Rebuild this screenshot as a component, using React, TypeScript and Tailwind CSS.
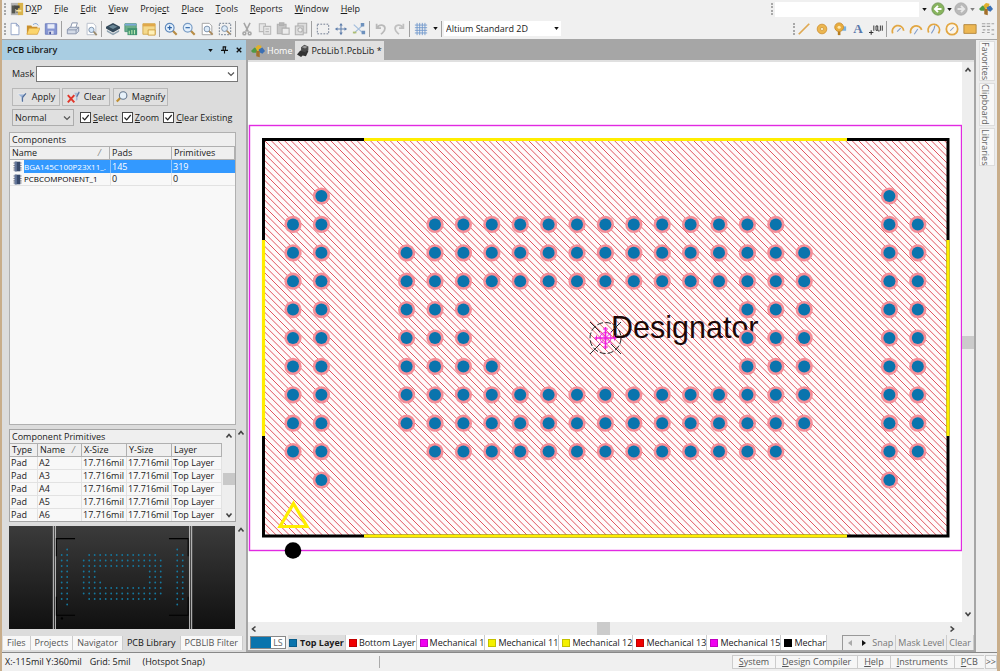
import type { ReactNode } from "react";

function Svg({ children, size = 14 }: { children: ReactNode; size?: number }) {
  return (
    <svg viewBox="0 0 16 16" width={size} height={size} aria-hidden="true" className="shrink-0">
      {children}
    </svg>
  );
}

const icons: Record<string, ReactNode> = {
  "New": <path d="M3.500 1.500h6l3 3v10h-9zM9.500 1.500v3h3" fill="#fff" stroke="#8c9ec4" />,
  "Open": (
    <>
      <path d="M1 4h5l1 1.500h6V14H1z" fill="#c98f2c" />
      <path d="M3.500 7H16l-3 7H1z" fill="#fbd56d" stroke="#d29b35" strokeWidth=".7" />
      <path d="M8 3q4-3 6 1" fill="none" stroke="#7d9fce" />
    </>
  ),
  "Save": (
    <>
      <path d="M1.500 2h13v12h-13z" fill="#8595d2" stroke="#6c7bbb" />
      <path d="M4 2.500h8v5H4z" fill="#e8ecf8" />
      <path d="M5 10h6v4H5z" fill="#d4d8ec" />
      <path d="M6 11h2v3H6z" fill="#47549a" />
    </>
  ),
  "Print": (
    <>
      <path d="M5 7l2-6h6l-2 6" fill="#fff" stroke="#7f8ca6" />
      <path d="M1.500 8.500l3-2.500h10v4.500l-3 3h-10z" fill="#d3dae6" stroke="#8490a8" />
      <path d="M1.500 9h10v4M11.500 9l3-3" fill="none" stroke="#8490a8" />
    </>
  ),
  "Preview": (
    <>
      <path d="M3.500 1.500h7l3 3v10h-10z" fill="#fff" stroke="#b4bcc8" />
      <circle cx="8.500" cy="9" r="3" fill="#d4e6f7" stroke="#7389a4" />
      <path d="M11 11l3.500 4" stroke="#9a8a6c" strokeWidth="2" />
    </>
  ),
  "Layers": (
    <>
      <path d="M1 9l7 4 7-4v2l-7 4-7-4z" fill="#8ea2b0" />
      <path d="M0 5.500L8 1l8 4.500v2L8 12 0 7.500z" fill="#33495a" />
      <path d="M3 5.500L8 3l5 2.500L8 8z" fill="#6a8797" />
    </>
  ),
  "Board": (
    <>
      <path d="M1 2h13v9H1z" fill="#6dae8a" stroke="#4a9478" />
      <path d="M1 2h13v2H1z" fill="#7aa8d8" />
      <path d="M4 7h11v8H4z" fill="#3f9370" />
      <path d="M6 14v-4M9 14V9M12 14v-5" stroke="#b8e8ae" strokeWidth="1.300" />
    </>
  ),
  "Document": (
    <>
      <path d="M1 2h14v12H1z" fill="#f4d98c" stroke="#cfa54c" />
      <path d="M1 2h14v3H1z" fill="#e0a84a" />
      <path d="M7 9h8v6H7z" fill="#fff0b8" stroke="#cf9b3a" />
    </>
  ),
  "Zoom in": (
    <>
      <path d="M9.500 9.500l5 5" stroke="#b98d45" strokeWidth="2.500" />
      <circle cx="6.500" cy="6.500" r="5" fill="#e3f0fc" stroke="#5e88bb" strokeWidth="1.300" />
      <path d="M4 6.500h5M6.500 4v5" stroke="#2b61a5" strokeWidth="1.300" />
    </>
  ),
  "Zoom out": (
    <>
      <path d="M9.500 9.500l5 5" stroke="#b98d45" strokeWidth="2.500" />
      <circle cx="6.500" cy="6.500" r="5" fill="#e3f0fc" stroke="#7a9cc4" strokeWidth="1.300" />
      <path d="M4 6.500h5" stroke="#2b61a5" strokeWidth="1.300" />
    </>
  ),
  "Fit document": (
    <>
      <path d="M2.500 1.500h8l3 3v10h-11z" fill="#fff" stroke="#9a9a9a" />
      <circle cx="8" cy="8" r="3.300" fill="#dcebf9" stroke="#7389a4" />
      <path d="M10.500 10.500l4 4" stroke="#a8875a" strokeWidth="2" />
    </>
  ),
  "Zoom area": (
    <>
      <path d="M1.500 1.500h13v13h-13z" fill="none" stroke="#5e6d80" strokeDasharray="2 1.500" />
      <circle cx="7.500" cy="7.500" r="3.300" fill="#dcebf9" stroke="#7389a4" />
      <path d="M10 10l4 4" stroke="#a8875a" strokeWidth="2" />
    </>
  ),
  "Cut": (
    <g stroke="#a6a6a6" strokeWidth="1.800" fill="none">
      <path d="M4.500 1l5 10M11.500 1l-5 10" />
      <circle cx="5" cy="13" r="1.600" />
      <circle cx="11" cy="13" r="1.600" />
    </g>
  ),
  "Copy": (
    <g fill="#e6e6e6" stroke="#b8b8b8" strokeWidth="1.200">
      <path d="M1.500 2h7v9h-7z" />
      <path d="M6.500 5h8v9h-8zM8.500 8h4M8.500 11h4" />
    </g>
  ),
  "Paste": (
    <g fill="#c6c6c6" stroke="#b0b0b0" strokeWidth="1.200">
      <path d="M1.500 2.500h10v11h-10zM4 1h5v3H4z" />
      <path d="M7 7h8v7H7z" fill="#ececec" />
    </g>
  ),
  "Paste array": (
    <g fill="#dcdcdc" stroke="#b0b0b0" strokeWidth="1.200">
      <path d="M4.500 1.500h10v11h-10z" />
      <path d="M1.500 4.500h9v10h-9z" />
      <circle cx="7" cy="9" r="2.500" fill="#eee" />
    </g>
  ),
  "Select area": <path d="M1.500 2.500h13v11h-13z" fill="none" stroke="#637087" strokeDasharray="2 1.500" />,
  "Move": (
    <g fill="#5f7eab">
      <path d="M7.400 3h1.200v10H7.400zM3 7.400h10v1.200H3z" />
      <path d="M8 1l2 3H6zM8 15l2-3H6zM1 8l3-2v4zM15 8l-3-2v4z" />
    </g>
  ),
  "Clear selection": (
    <>
      <path d="M2 3l11 10M13 3L2 13" stroke="#a4bedc" strokeWidth="1.500" />
      <path d="M10 1h4v4h-4zM11 10h4v4h-4z" fill="#6d91bd" />
      <path d="M1 11h4v2H1z" fill="#aebf72" />
    </>
  ),
  "Undo": <path d="M3 2v5h5M3.500 7C6 2 12.500 3 12.500 7.500 12.500 11 10 12 8 14" fill="none" stroke="#b9b9b9" strokeWidth="2" />,
  "Redo": <path d="M13 2v5H8M12.500 7C10 2 3.500 3 3.500 7.500 3.500 11 6 12 8 14" fill="none" stroke="#c0c0c0" strokeWidth="2" />,
  "Grid": <path d="M3.500 1v14M6.500 1v14M9.500 1v14M12.500 1v14M1 3.500h14M1 6.500h14M1 9.500h14M1 12.500h14" stroke="#6f97cb" />,
  "Line": <path d="M2 14L14 2" stroke="#dfa953" strokeWidth="2" />,
  "Pad": (
    <>
      <circle cx="8" cy="8" r="5.500" fill="#ecb650" stroke="#cf9438" />
      <circle cx="8" cy="8" r="1.800" fill="#fff2c8" stroke="#bc8126" strokeWidth=".6" />
    </>
  ),
  "Via": (
    <>
      <path d="M9 5h6v5H9z" fill="#78b2e0" />
      <circle cx="7" cy="6" r="5" fill="#e9ad3e" stroke="#c98f33" />
      <circle cx="7" cy="6" r="1.800" fill="#ffe9ae" />
      <path d="M7 11v4" stroke="#b57c20" strokeWidth="3" />
    </>
  ),
  "Text": (
    <text x="8" y="13" textAnchor="middle" fontFamily="Liberation Serif, serif" fontWeight="700" fontSize="15" fill="#5a78ab">
      A
    </text>
  ),
  "Coordinate": (
    <>
      <path d="M0 12h5M2.500 9.500v5" stroke="#333" strokeWidth="1.200" />
      <path d="M5.500 4v6M8 4.500h2v5H8zM11.300 9v2M13 4v6M15.200 4v6" fill="none" stroke="#333" strokeWidth="1.100" />
    </>
  ),
  "Arc by centre": (
    <>
      <path d="M2 13A6.500 6.500 0 1 1 14.500 10" fill="none" stroke="#e2a743" strokeWidth="2" />
      <path d="M7 11l4-4" stroke="#7f9bc9" strokeWidth="1.200" />
    </>
  ),
  "Arc by edge": (
    <>
      <path d="M2 13A6.500 6.500 0 1 1 14.500 9" fill="none" stroke="#e2a743" strokeWidth="2" />
      <path d="M6 14l4-6" stroke="#7f9bc9" strokeWidth="1.200" />
    </>
  ),
  "Arc any angle": (
    <>
      <path d="M2 12A6.500 6.500 0 1 1 13 13" fill="none" stroke="#e2a743" strokeWidth="2" />
      <path d="M5 13l3-5 1-4" fill="none" stroke="#7f9bc9" strokeWidth="1.200" />
    </>
  ),
  "Full circle": (
    <>
      <circle cx="8" cy="8" r="6.500" fill="#fbf6ec" stroke="#e2a743" strokeWidth="2" />
      <path d="M6 10l4-4" stroke="#7f9bc9" strokeWidth="1.200" />
    </>
  ),
  "Fill": <path d="M1 3h14v10H1z" fill="#ecb753" stroke="#b08338" />,
  "Array paste": (
    <g fill="none" stroke="#a2a2a2" strokeWidth="1.400">
      <path d="M1 2h4M6.500 2h4M12 2h3M1 5h4M6.500 5h4M2 9h3M7 9h3M7 12h3M12 9h3M1 12h3M12 14h3" />
    </g>
  ),
};

const groups = [
  ["New", "Open", "Save"],
  ["Print", "Preview"],
  ["Layers", "Board", "Document"],
  ["Zoom in", "Zoom out", "Fit document", "Zoom area"],
  ["Cut", "Copy", "Paste", "Paste array"],
  ["Select area", "Move", "Clear selection"],
  ["Undo", "Redo"],
];

const menus: [string, string, string][] = [
  ["D", "X", "P"],
  ["", "F", "ile"],
  ["", "E", "dit"],
  ["", "V", "iew"],
  ["Proje", "c", "t"],
  ["", "P", "lace"],
  ["", "T", "ools"],
  ["", "R", "eports"],
  ["", "W", "indow"],
  ["", "H", "elp"],
];

function Grip() {
  return <span className="h-3 w-0 shrink-0 border-l-2 border-dotted border-[#a8a8a8]" />;
}

function Divider() {
  return <span className="mr-0.5 ml-px h-4 w-px shrink-0 bg-[#a0a0a0]" />;
}

function ToolButton({ name }: { name: string }) {
  return (
    <button type="button" aria-label={name} className="flex h-4 w-[18px] shrink-0 items-center justify-center">
      <Svg>{icons[name]}</Svg>
    </button>
  );
}

function Caret() {
  return (
    <svg viewBox="0 0 6 4" width="5" height="3" aria-hidden="true" className="shrink-0">
      <path d="M0 0h6L3 4z" fill="#111" />
    </svg>
  );
}

function Chevron({ className }: { className: string }) {
  return (
    <svg viewBox="0 0 8 8" width="8" height="8" aria-hidden="true" className={className}>
      <path d="M1 2.500L4 5.500 7 2.500" fill="none" stroke="#555" strokeWidth="1.200" />
    </svg>
  );
}

function ArrowGlyph({ path }: { path: string }) {
  return (
    <svg viewBox="0 0 8 8" width="8" height="8" aria-hidden="true">
      <path d={path} fill="none" stroke="#444" strokeWidth="1.600" />
    </svg>
  );
}

const up = "M1.500 5.500L4 2.500l2.500 3";
const down = "M1.500 2.500L4 5.500l2.500-3";
const left = "M5.500 1.500L2.500 4l3 2.500";
const right = "M2.500 1.500L5.500 4l-3 2.500";

function PinwheelIcon() {
  return (
    <Svg>
      <path d="M0 8l4-4 4 2-2 4H2z" fill="#4f9a45" />
      <path d="M5 4l3-3 4 1-1 5-4 1z" fill="#e0b02c" />
      <path d="M9 6l4-2 3 4-3 3-4-2z" fill="#3a6fb4" />
      <path d="M6 8h4v7l-4-1z" fill="#a3702a" />
    </Svg>
  );
}

function MenuBar() {
  return (
    <header className="flex h-[18px] shrink-0 items-center pr-1 pl-0.5">
      <Grip />
      <span className="ml-1 flex">
        <Svg>
          <path d="M1 1h9v14H1z" fill="#b4b4b4" />
          <path d="M2 4h4v9H2z" fill="#54564f" />
          <path d="M9 1h6v14H9z" fill="#d9b34b" />
          <path d="M5 4h6v3H9v5H7V8H5z" fill="#4a4a44" />
          <path d="M7 9h6v2H7z" fill="#f6e6a6" />
        </Svg>
      </span>
      <nav className="ml-px flex gap-3">
        {menus.map(([a, b, c]) => (
          <button type="button" key={a + b + c}>
            {a}
            <u>{b}</u>
            {c}
          </button>
        ))}
      </nav>
      <div className="ml-auto flex items-center">
        <Grip />
        <input aria-label="Address" className="ml-0.5 h-[15px] w-[144px] bg-white px-1" />
        <button type="button" aria-label="Address history" className="flex h-4 w-2.5 items-center justify-center">
          <Caret />
        </button>
        <button type="button" aria-label="Back" className="mx-0.5">
          <Svg>
            <circle cx="8" cy="8" r="7" fill="#88b45e" stroke="#6c9450" />
            <path d="M12 8H5M8 4.500L4.500 8 8 11.500" fill="none" stroke="#fff" strokeWidth="2.200" />
          </Svg>
        </button>
        <Caret />
        <button type="button" aria-label="Forward" className="mx-0.5">
          <Svg>
            <circle cx="8" cy="8" r="7" fill="#b9b9b9" stroke="#a8a8a8" />
            <path d="M4 8h7M8 4.500L11.500 8 8 11.500" fill="none" stroke="#e8e8e8" strokeWidth="2.200" />
          </Svg>
        </button>
        <span className="mr-1 flex opacity-50">
          <Caret />
        </span>
        <PinwheelIcon />
      </div>
    </header>
  );
}

function ToolBar() {
  return (
    <div className="flex h-[21px] shrink-0 items-center pl-0.5">
      <Grip />
      {groups.map((group) => (
        <div key={group[0]} className="flex items-center">
          {group.map((name) => (
            <ToolButton key={name} name={name} />
          ))}
          <Divider />
        </div>
      ))}
      <ToolButton name="Grid" />
      <button type="button" aria-label="Grid options" className="flex h-4 w-2.5 items-center justify-center">
        <Caret />
      </button>
      <Divider />
      <div className="relative flex items-center">
        <select aria-label="View configuration" className="h-[15px] w-[117px] appearance-none bg-white pl-0.5">
          <option>Altium Standard 2D</option>
        </select>
        <span className="pointer-events-none absolute right-0.5">
          <Caret />
        </span>
      </div>
      <div className="ml-auto flex items-center">
        <Grip />
        <ToolButton name="Line" />
        <ToolButton name="Pad" />
        <ToolButton name="Via" />
        <ToolButton name="Text" />
        <ToolButton name="Coordinate" />
        <Divider />
        <ToolButton name="Arc by centre" />
        <ToolButton name="Arc by edge" />
        <ToolButton name="Arc any angle" />
        <ToolButton name="Full circle" />
        <ToolButton name="Fill" />
        <ToolButton name="Array paste" />
      </div>
    </div>
  );
}

type Node = [number, number];

function buildPads(): Node[] {
  const rows: [number, number, number][] = [
    [-4, -6, 6],
    [-3, -7, 7],
    [-2, -7, 7],
    [-1, -7, -5],
    [-1, 5, 7],
    [0, -7, -5],
    [0, 5, 7],
    [1, -7, -4],
    [1, 5, 7],
    [2, -7, 7],
    [3, -7, 7],
    [4, -6, 6],
  ];
  const pads: Node[] = [];
  for (const [row, from, to] of rows) {
    for (let col = from; col <= to; col++) pads.push([col, row]);
  }
  for (const col of [-11, -10, 10, 11]) {
    const reach = Math.abs(col) === 10 ? 5 : 4;
    for (let row = -reach; row <= reach; row++) pads.push([col, row]);
  }
  return pads;
}

const pads = buildPads();

const hatch = Array.from({ length: 165 }, (_, i) => `M${(264 - 396 + i * 6.6).toFixed(1)} 140l396 396`).join("");

function Footprint() {
  return (
    <svg viewBox="248 62 714 560" className="h-full w-full" role="img" aria-label="Footprint editor canvas">
      <defs>
        <clipPath id="body">
          <rect x="264" y="140" width="684" height="396" />
        </clipPath>
      </defs>
      <rect x="249.500" y="125.500" width="712" height="425" fill="none" stroke="#e22ae2" strokeWidth="1.400" />
      <rect x="264" y="140" width="684" height="396" fill="#fffafa" />
      <path d={hatch} clipPath="url(#body)" stroke="#e05560" strokeWidth="1" />
      <path d="M263.500 139.500H948V536H263.500z" fill="none" stroke="#000" strokeWidth="3" />
      <path d="M364 139.500H847M364 536H847M263.500 240V436M948 240V436" stroke="#ffee00" strokeWidth="3.200" />
      <text x="611" y="338" fontFamily="Liberation Sans, Arial, sans-serif" fontSize="30.500" fill="#1c0808">
        Designator
      </text>
      {pads.map(([c, r]) => (
        <g key={`${c},${r}`}>
          <circle cx={605.4 + c * 28.4} cy={338 + r * 28.4} r="8.600" fill="#f48e98" />
          <circle cx={605.4 + c * 28.4} cy={338 + r * 28.4} r="6" fill="#0a74ad" />
        </g>
      ))}
      <circle cx="605.500" cy="338" r="15.500" fill="none" stroke="#2a2a2a" strokeDasharray="6 2" />
      <path d="M590 322l10 10M621 322l-10 10M590 354l10-10M621 354l-10-10" stroke="#2a2a2a" />
      <g stroke="#f01ee0" fill="none">
        <path d="M605.500 327v22M594.500 338h22" strokeWidth="1.600" />
        <path d="M599 331.500l13 13M612 331.500l-13 13" />
        <circle cx="605.500" cy="338" r="5.500" />
        <path d="M603 329h5M603 347h5M596.500 335.500v5M614.500 335.500v5" />
      </g>
      <path d="M293.500 503.500L307 526.500H280z" fill="none" stroke="#ffee00" strokeWidth="3.200" />
      <circle cx="293" cy="550.500" r="8.300" fill="#000" />
    </svg>
  );
}

function Preview() {
  return (
    <svg viewBox="10 526 225 102" preserveAspectRatio="xMidYMid slice" className="h-full w-full" role="img" aria-label="Footprint preview">
      <defs>
        <linearGradient id="dark" x1="0" y1="0" x2="0" y2="1">
          <stop offset="0" stopColor="#3b3b3b" />
          <stop offset="1" stopColor="#101010" />
        </linearGradient>
      </defs>
      <rect x="-90" y="526" width="425" height="102" fill="url(#dark)" />
      <path d="M54.500 526v102M56.500 526v102M189.500 526v102M191.500 526v102" stroke="#ccc" />
      <path d="M57.500 556v-17.500H76M169 538.500h19V556M57.500 596v18.500H76M169 614.500h19V596" fill="none" stroke="#000" />
      <circle cx="63" cy="617.500" r="1.200" fill="#000" />
      {pads.map(([c, r]) => (
        <circle key={`${c},${r}`} cx={122.7 + c * 5.45} cy={576.5 + r * 5.45} r=".9" fill="#15789f" />
      ))}
    </svg>
  );
}

function Check({ a, b }: { a: string; b: string }) {
  return (
    <label className="relative flex items-center gap-0.5 whitespace-nowrap">
      <input type="checkbox" defaultChecked className="peer h-[11px] w-[11px] appearance-none border border-[#444] bg-white" />
      <svg viewBox="0 0 11 11" width="11" height="11" aria-hidden="true" className="pointer-events-none absolute left-0 hidden peer-checked:block">
        <path d="M2.500 5.500l2.200 2.300L8.700 3" fill="none" stroke="#222" strokeWidth="1.200" />
      </svg>
      <span>
        <u>{a}</u>
        {b}
      </span>
    </label>
  );
}

function ChipIcon() {
  return (
    <Svg size={11}>
      <path d="M2 3h12M2 6.500h12M2 10h12M2 13h12" stroke="#8c8d94" strokeWidth="1.500" />
      <path d="M4 1h8v14H4z" fill="#384a6c" />
      <path d="M4 1h3v14H4z" fill="#64779c" />
    </Svg>
  );
}

const primitives = ["A2", "A3", "A4", "A5", "A6"];
const button = "flex h-[18px] items-center justify-center gap-1 border border-[#b8b8b8] bg-[#e0e0e0]";
const th = "border-r border-b border-[#b0b0b0] px-0.5 text-left font-normal";

function LibraryPanel() {
  return (
    <aside className="flex w-[244px] shrink-0 flex-col bg-[#dcdcdc]">
      <div className="flex h-5 shrink-0 items-center bg-[#a9cde2] pr-1 pl-[5px]">
        <h1 className="font-semibold">PCB Library</h1>
        <div className="ml-auto flex items-center gap-2">
          <button type="button" aria-label="Panel menu">
            <Caret />
          </button>
          <button type="button" aria-label="Pin panel">
            <svg viewBox="0 0 8 8" width="7" height="8" aria-hidden="true">
              <path d="M2.500 0v4M5 0v4M2 .5h4M0 4.500h8M4 4v4" stroke="#111" strokeWidth="1.300" />
            </svg>
          </button>
          <button type="button" aria-label="Close panel">
            <svg viewBox="0 0 8 8" width="6" height="6" aria-hidden="true">
              <path d="M1 1l6 6M7 1L1 7" stroke="#111" strokeWidth="1.800" />
            </svg>
          </button>
        </div>
      </div>

      <div className="flex shrink-0 flex-col px-2 pt-1.5">
        <div className="relative flex items-center pl-0.5">
          <label htmlFor="mask" className="w-6">
            Mask
          </label>
          <select id="mask" className="h-4 flex-1 appearance-none border border-[#777] bg-white">
            <option value=""></option>
          </select>
          <Chevron className="pointer-events-none absolute right-[3px]" />
        </div>
        <div className="mt-1.5 flex gap-0.5 pl-0.5">
          <button type="button" className={button + " w-12"}>
            <Svg size={11}>
              <path d="M1 3h12L9 8v7l-3-2V8z" fill="#9ab2d6" stroke="#f4f4f4" />
              <path d="M8 8l5-6M8 8v6" stroke="#54709b" strokeWidth="1.800" />
            </Svg>
            Apply
          </button>
          <button type="button" className={button + " w-12"}>
            <Svg size={13}>
              <path d="M9 2h7l-3 5v4l-2 1V7z" fill="#a8bbd6" />
              <path d="M12 7l3-6" stroke="#54709b" strokeWidth="1.300" />
              <path d="M1 5l8 9M9 5l-8 9" stroke="#e0362a" strokeWidth="2.400" />
            </Svg>
            Clear
          </button>
          <button type="button" className={button + " ml-px w-[55px]"}>
            <Svg size={12}>
              <path d="M6 9l-5 5" stroke="#c08f32" strokeWidth="3" />
              <circle cx="9.500" cy="6" r="5" fill="#e6f1fa" stroke="#66788e" strokeWidth="1.500" />
            </Svg>
            Magnify
          </button>
        </div>
        <div className="mt-[3px] flex items-center gap-1 pl-0.5">
          <div className="relative mr-0.5 flex items-center">
            <select aria-label="Highlight mode" className="h-[17px] w-[62px] appearance-none border border-[#adadad] bg-[#e0e0e0] pl-0.5">
              <option>Normal</option>
            </select>
            <Chevron className="pointer-events-none absolute right-[3px]" />
          </div>
          <Check a="S" b="elect" />
          <Check a="Z" b="oom" />
          <Check a="C" b="lear Existing" />
        </div>
      </div>

      <section className="mt-1.5 mr-[10px] ml-[7px] min-h-0 flex-1 overflow-hidden border border-[#b0b0b0] bg-[#f8f8f8]">
        <h2 className="h-[14px] border-b border-[#b0b0b0] bg-[#efefef] px-0.5 leading-[13px]">Components</h2>
        <table className="w-full table-fixed border-separate border-spacing-0">
          <colgroup>
            <col className="w-[100px]" />
            <col className="w-[62px]" />
            <col />
          </colgroup>
          <thead>
            <tr className="h-[13px] bg-[#efefef]">
              <th className={th}>
                <span className="flex justify-between pr-1.5">
                  Name <i className="text-[#888]">/</i>
                </span>
              </th>
              <th className={th}>Pads</th>
              <th className={th}>Primitives</th>
            </tr>
          </thead>
          <tbody>
            <tr className="h-[13px] text-white">
              <td className="p-0">
                <span className="flex items-center gap-px pl-0.5">
                  <ChipIcon />
                  <span className="h-[13px] flex-1 bg-[#3399ff] text-[8px] leading-[13px] whitespace-nowrap">BGA145C100P23X11_.</span>
                </span>
              </td>
              <td className="border-x border-[#8ec4fa] bg-[#3399ff] py-0 pr-0 pl-px">145</td>
              <td className="bg-[#3399ff] py-0 pr-0 pl-px">319</td>
            </tr>
            <tr className="h-[13px]">
              <td className="border-b border-[#e2e2e2] p-0">
                <span className="flex items-center gap-px pl-0.5">
                  <ChipIcon />
                  <span className="text-[8px] whitespace-nowrap text-black">PCBCOMPONENT_1</span>
                </span>
              </td>
              <td className="border-x border-b border-[#e2e2e2] py-0 pr-0 pl-px">0</td>
              <td className="border-b border-[#e2e2e2] py-0 pr-0 pl-px">0</td>
            </tr>
          </tbody>
        </table>
      </section>

      <div className="mt-1 flex h-[93px] shrink-0 pl-[7px]">
        <section className="flex w-[227px] overflow-hidden border border-[#a5a5a5] bg-[#f8f8f8]">
          <div className="flex-1">
            <h2 className="h-[14px] border-b border-[#b0b0b0] bg-[#efefef] px-0.5 leading-[13px]">Component Primitives</h2>
            <table className="w-full table-fixed border-separate border-spacing-0 whitespace-nowrap">
              <colgroup>
                <col className="w-7" />
                <col className="w-11" />
                <col className="w-[45px]" />
                <col className="w-[45px]" />
                <col />
              </colgroup>
              <thead>
                <tr className="h-[13px] bg-[#efefef]">
                  <th className={th}>Type</th>
                  <th className={th}>
                    <span className="flex justify-between pr-1">
                      Name <i className="text-[#888]">/</i>
                    </span>
                  </th>
                  <th className={th}>X-Size</th>
                  <th className={th}>Y-Size</th>
                  <th className={th}>Layer</th>
                </tr>
              </thead>
              <tbody>
                {primitives.map((name) => (
                  <tr key={name} className="h-[13px]">
                    {["Pad", name, "17.716mil", "17.716mil", "Top Layer"].map((cell, i) => (
                      <td key={i} className="border-r border-b border-[#e2e2e2] py-0 pr-0 pl-px">
                        {cell}
                      </td>
                    ))}
                  </tr>
                ))}
              </tbody>
            </table>
          </div>
          <div className="flex w-[13px] shrink-0 flex-col items-center justify-between bg-[#eee] py-0.5">
            <ArrowGlyph path={up} />
            <span className="mt-1.5 h-3 w-3 bg-[#c8c8c8]" />
            <ArrowGlyph path={down} />
          </div>
        </section>
        <span className="pl-px">
          <ArrowGlyph path={up} />
        </span>
      </div>

      <div className="mt-1 flex h-[103px] shrink-0 pl-[7px]">
        <div className="w-[226px]">
          <Preview />
        </div>
        <span className="pl-0.5">
          <ArrowGlyph path={up} />
        </span>
      </div>

      <nav className="mt-[7px] mb-0.5 flex h-[14px] shrink-0 pl-px whitespace-nowrap text-[#555]">
        {["Files", "Projects", "Navigator", "PCB Library", "PCBLIB Filter"].map((tab) => (
          <button
            type="button"
            key={tab}
            className={
              tab === "PCB Library"
                ? "border-r border-[#ccc] px-1 text-[#111]"
                : "border-r border-[#ccc] bg-[#f8f8f8] px-1"
            }
          >
            {tab}
          </button>
        ))}
      </nav>
    </aside>
  );
}

const layers: [string, string][] = [
  ["Top Layer", "bg-[#0a74ad]"],
  ["Bottom Layer", "bg-[#f00000]"],
  ["Mechanical 1", "bg-[#f000f0]"],
  ["Mechanical 11", "bg-[#f4f000]"],
  ["Mechanical 12", "bg-[#f4f000]"],
  ["Mechanical 13", "bg-[#f00000]"],
  ["Mechanical 15", "bg-[#f000f0]"],
  ["Mechar", "bg-black"],
];

function Editor() {
  return (
    <main className="flex min-w-0 flex-1 flex-col border-x-2 border-b-2 border-[#a6a6a6] bg-[#eee]">
      <div className="flex h-5 shrink-0 bg-[#a6a6a6] pt-px">
        <button type="button" className="flex items-center gap-0.5 pr-[3px] pl-[3px] text-white">
          <PinwheelIcon />
          Home
        </button>
        <button type="button" className="flex items-center gap-px bg-[#e0e0e0] px-0.5">
          <Svg size={13}>
            <path d="M5 4l4-3 5 2v5l-5 3-4-2z" fill="#4c4c4c" />
            <path d="M6 4l3-2 4 1.500-3 2z" fill="#999" />
            <path d="M0 13l4-5 6 2 2-2 2 1-3 6-4-1-2 2z" fill="#333" />
          </Svg>
          PcbLib1.PcbLib *
        </button>
      </div>
      <div className="h-0.5 shrink-0 bg-[#e0e0e0]" />
      <div className="flex min-h-0 flex-1">
        <div className="min-w-0 flex-1 bg-white">
          <Footprint />
        </div>
        <div className="flex w-3 shrink-0 flex-col items-center justify-between py-1">
          <ArrowGlyph path={up} />
          <span className="h-[13px] w-full bg-[#cbcbcb]" />
          <ArrowGlyph path={down} />
        </div>
      </div>
      <div className="flex h-[13px] shrink-0 items-center justify-between pr-[18px] pl-0.5">
        <ArrowGlyph path={left} />
        <span className="h-full w-[13px] bg-[#cbcbcb]" />
        <ArrowGlyph path={right} />
      </div>
      <div className="flex h-[15px] shrink-0 whitespace-nowrap">
        <button type="button" className="my-px ml-0.5 flex w-9 shrink-0 border border-[#888] bg-white text-[#666]">
          <span className="h-full w-5 bg-[#0a74ad]" />
          <span className="flex-1 leading-[11px]">LS</span>
        </button>
        <div className="ml-0.5 flex min-w-0 flex-1 overflow-hidden">
          {layers.map(([name, color], i) => (
            <button
              type="button"
              key={name}
              className={
                i === 0
                  ? "flex shrink-0 items-center gap-[3px] border-r border-[#ccc] bg-[#dedede] px-px font-bold"
                  : "flex shrink-0 items-center gap-0.5 border-r border-[#ccc] bg-white pl-[3px]"
              }
            >
              <span className={"h-2 w-2 border border-black/20 " + color} />
              {name}
            </button>
          ))}
        </div>
        <div className="flex w-7 shrink-0 items-center justify-around border-t border-l border-[#999]">
          <button type="button" aria-label="Scroll tabs left">
            <svg viewBox="0 0 4 6" width="4" height="6" aria-hidden="true">
              <path d="M4 0v6L0 3z" fill="#aaa" />
            </svg>
          </button>
          <button type="button" aria-label="Scroll tabs right">
            <svg viewBox="0 0 4 6" width="4" height="6" aria-hidden="true">
              <path d="M0 0v6l4-3z" fill="#111" />
            </svg>
          </button>
        </div>
        <div className="flex shrink-0 text-[#777]">
          {["Snap", "Mask Level", "Clear"].map((label) => (
            <button type="button" key={label} className="border-r border-[#ccc] px-0.5">
              {label}
            </button>
          ))}
        </div>
      </div>
    </main>
  );
}

const statusButtons: [string, string][] = [
  ["S", "ystem"],
  ["D", "esign Compiler"],
  ["H", "elp"],
  ["I", "nstruments"],
  ["P", "CB"],
];

export default function App() {
  return (
    <div className="flex h-screen flex-col overflow-hidden border-r-3 border-l-2 border-[#c8ad8a] bg-[#f0f0f0] font-['Open_Sans','Noto_Sans',sans-serif] text-[9px] leading-3 text-[#1a1a1a]">
      <MenuBar />
      <ToolBar />
      <div className="flex min-h-0 flex-1 border-t border-[#a6a6a6]">
        <LibraryPanel />
        <Editor />
        <aside className="flex w-[21px] shrink-0 flex-col items-end gap-0.5 bg-[#ececec] pt-px pr-0.5 text-[#666]">
          {["Favorites", "Clipboard", "Libraries"].map((tab) => (
            <button
              type="button"
              key={tab}
              className="w-4 border border-[#ddd] bg-[#f8f8f8] py-0.5 leading-[14px] [writing-mode:vertical-rl]"
            >
              {tab}
            </button>
          ))}
        </aside>
      </div>
      <footer className="flex h-[19px] shrink-0 items-center border-t border-[#888] pl-[3px] whitespace-nowrap">
        <div className="flex w-[374px] items-center gap-2">
          <span>X:-115mil Y:360mil</span>
          <span>Grid: 5mil</span>
          <span className="pl-1">(Hotspot Snap)</span>
        </div>
        <span className="h-3 w-px bg-[#aaa]" />
        <div className="ml-auto flex text-[#555]">
          {statusButtons.map(([a, b]) => (
            <button type="button" key={a + b} className="border-y border-l border-[#ccc] bg-[#f6f6f6] px-1.5">
              <u>{a}</u>
              {b}
            </button>
          ))}
          <button type="button" aria-label="More panels" className="ml-px border border-[#ccc] bg-[#f6f6f6]">
            &gt;&gt;
          </button>
        </div>
      </footer>
    </div>
  );
}
